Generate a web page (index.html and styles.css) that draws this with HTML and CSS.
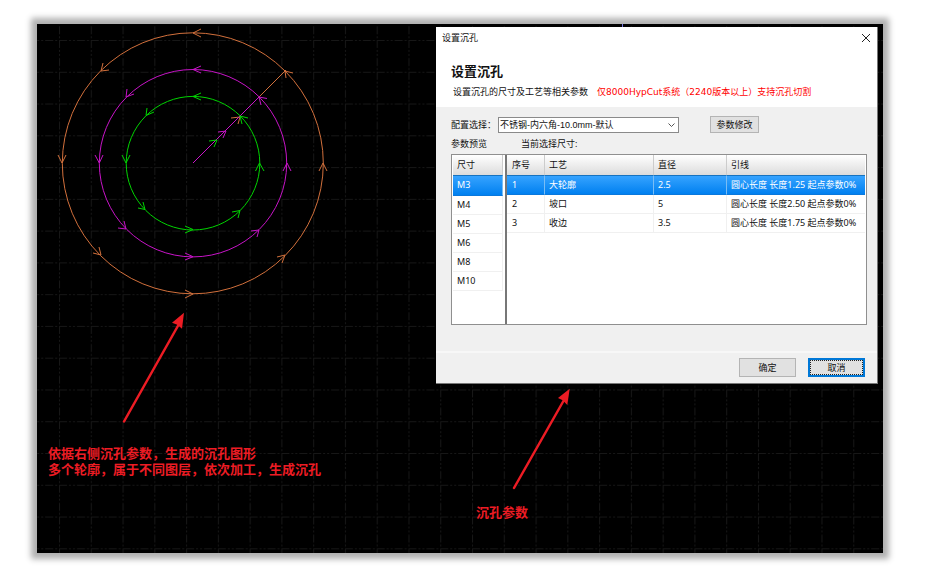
FILE: index.html
```html
<!DOCTYPE html>
<html lang="zh-CN">
<head>
<meta charset="utf-8">
<title>设置沉孔</title>
<link rel="stylesheet" href="styles.css">
</head>
<body>
<main class="canvas">
  <svg class="drawing" aria-hidden="true">
    <defs>
      <pattern id="grid" width="31.77" height="31.77" patternUnits="userSpaceOnUse" x="59" y="40">
        <path d="M0 .5H31.77M.5 0V31.77" fill="none" stroke="#171717" stroke-dasharray="8 2 2 2 2 2 8 2 2 2"/>
      </pattern>
    </defs>
    <g transform="translate(-37 -24)">
      <rect x="37" y="24" width="100%" height="100%" fill="url(#grid)"/>
      <path d="M622.5 24V28" stroke="#7070e0"/>
      <g class="contour orange">
        <circle cx="192.8" cy="163.3" r="130.5"/>
        <path class="lead" d="M259 97L286 70"/>
        <path d="M201 29L193 33L201 37M103 63L101 71L109 70M58 155L62 163L66 155M93 253L101 255L99 247M185 290L193 294L185 298M277 257L285 255L282 263M319 171L323 163L327 171M286 78L285 71L293 73M231 118L240 117L238 124"/>
      </g>
      <g class="contour magenta">
        <circle cx="193" cy="163.2" r="93.7"/>
        <path class="lead" d="M193 163L259 97"/>
        <path d="M201 66L193 69.5L201 73M127 89L126 97L134 94M95 155L99.3 163L103 155M118 228L126 229L124 221M185 253L193 256.7L185 260M251 231L259 230L257 237M283 171L287 163L291 171M261 105L259 97L267 98.5M218 132L226 131L223 138"/>
      </g>
      <g class="contour green">
        <circle cx="193" cy="163.2" r="66.8"/>
        <path d="M201 93L193 96.5L201 100M147 108L146 115.5L154 112M122 155L126 163L130 155M138 208L145 209.5L143 202M185 226L193 229.5L185 233M232 212L240 210.5L238 218M255.5 171L259.5 163L264 171M242 124L240 116L248 118M209 141L217 140L214 147"/>
      </g>
      <g class="pointer">
        <path class="shaft" d="M124 421.5L179 324M514 488L564 400"/>
        <path class="tip" d="M184 312.7L172 322.7L177.3 324.7L182 328.7ZM569.7 388.7L558 398L562.7 400.3L567.3 405Z"/>
      </g>
    </g>
  </svg>

  <p class="note note-shape">依据右侧沉孔参数，生成的沉孔图形<br>多个轮廓，属于不同图层，依次加工，生成沉孔</p>
  <p class="note note-dialog">沉孔参数</p>

  <section class="dialog" role="dialog" aria-labelledby="dialog-title">
    <header class="dialog-header">
      <div class="titlebar">
        <span>设置沉孔</span>
        <button class="close" type="button" aria-label="关闭">
          <svg width="8" height="8" viewBox="0 0 8 8"><path d="M0 0L8 8M8 0L0 8" stroke="#222" fill="none"/></svg>
        </button>
      </div>
      <h1 id="dialog-title">设置沉孔</h1>
      <p class="subtitle"><span>设置沉孔的尺寸及工艺等相关参数</span><span class="warning">仅8000HypCut系统（2240版本以上）支持沉孔切割</span></p>
    </header>

    <form class="dialog-body">
      <div class="config-row">
        <label for="config">配置选择：</label>
        <span class="select-box">
          <select id="config"><option>不锈钢-内六角-10.0mm-默认</option></select>
          <svg width="7" height="4" viewBox="0 0 7 4"><path d="M.5 .5L3.5 3.5L6.5 .5" fill="none" stroke="#555"/></svg>
        </span>
        <button class="button edit" type="button">参数修改</button>
      </div>
      <div class="caption-row"><span>参数预览</span><span>当前选择尺寸:</span></div>
      <div class="tables">
        <div class="sizes">
          <table class="size-table">
            <thead><tr><th>尺寸</th></tr></thead>
            <tbody>
              <tr class="selected"><td>M3</td></tr>
              <tr><td>M4</td></tr>
              <tr><td>M5</td></tr>
              <tr><td>M6</td></tr>
              <tr><td>M8</td></tr>
              <tr><td>M10</td></tr>
            </tbody>
          </table>
        </div>
        <div class="steps">
          <table class="step-table">
            <colgroup><col class="col-index"><col class="col-process"><col class="col-diameter"><col></colgroup>
            <thead><tr><th>序号</th><th>工艺</th><th>直径</th><th>引线</th></tr></thead>
            <tbody>
              <tr class="selected"><td>1</td><td>大轮廓</td><td>2.5</td><td>圆心长度 长度1.25 起点参数0%</td></tr>
              <tr><td>2</td><td>坡口</td><td>5</td><td>圆心长度 长度2.50 起点参数0%</td></tr>
              <tr><td>3</td><td>收边</td><td>3.5</td><td>圆心长度 长度1.75 起点参数0%</td></tr>
            </tbody>
          </table>
        </div>
      </div>
    </form>

    <footer class="dialog-footer">
      <button class="button action" type="button">确定</button>
      <button class="button action default" type="button">取消</button>
    </footer>
  </section>
</main>
</body>
</html>
```
FILE: styles.css
```css
* { box-sizing: border-box; }

body {
  margin: 0;
  padding: 24px 56px 29px 37px;
  background: #fff;
  color: #111;
  font: 9px/12px "Noto Sans", "Noto Sans CJK SC", sans-serif;
}

h1, p { margin: 0; }

button, select { font: inherit; color: inherit; }

.canvas {
  position: relative;
  min-height: calc(100vh - 53px);
  background: #000;
  box-shadow: 0 0 6px 6px #b0b0b0;
}

.drawing {
  position: absolute;
  inset: 0;
  width: 100%;
  height: 100%;
}

.contour { fill: none; stroke-width: 1; }
.lead { shape-rendering: crispEdges; }
.orange { stroke: #d2703c; }
.magenta { stroke: #c814c8; }
.green { stroke: #00d400; }
.pointer .shaft { fill: none; stroke: #ed1c24; stroke-width: 2.5; stroke-linecap: round; }
.pointer .tip { fill: #ed1c24; }

.note {
  position: absolute;
  color: #ed1c24;
  font: bold 13px/16px "Noto Sans CJK SC", sans-serif;
  white-space: nowrap;
}
.note-shape { left: 11px; top: 421px; }
.note-dialog { left: 439px; top: 480px; }

.dialog {
  position: absolute;
  top: 3px;
  right: 5px;
  width: 442px;
  background: #f0f0f0;
  border-right: 1px solid #777;
  border-bottom: 1px solid #777;
}

.dialog-header {
  height: 80px;
  background: #fff;
}

.titlebar {
  display: flex;
  align-items: center;
  justify-content: space-between;
  height: 22px;
  padding: 0 7px 0 6px;
}

.close {
  display: flex;
  padding: 0;
  border: 0;
  background: none;
}

h1 {
  margin: 12px 15px 0;
  font-size: 13px;
  line-height: 20px;
}

.subtitle {
  display: flex;
  gap: 9px;
  padding: 5px 17px 0;
  white-space: nowrap;
}
.warning {
  color: #f00;
  font-family: "DejaVu Sans", "Noto Sans CJK SC", sans-serif;
}

.dialog-body { padding: 9px 10px 26px 15px; }

.config-row {
  display: flex;
  align-items: center;
  height: 17px;
}
.config-row label { width: 47px; white-space: nowrap; }

.select-box {
  position: relative;
  width: 181px;
  margin-right: 31px;
}
.select-box select {
  display: block;
  width: 100%;
  height: 16px;
  padding: 0 16px 0 1px;
  border: 1px solid #8a8a8a;
  border-radius: 0;
  background: #fff;
  font-family: "Liberation Sans", "Noto Sans CJK SC", sans-serif;
  appearance: none;
}
.select-box svg {
  position: absolute;
  right: 4px;
  top: 6px;
  pointer-events: none;
}

.button {
  padding: 0;
  border: 1px solid #b4b4b4;
  background: #e1e1e1;
}
.edit { width: 49px; height: 17px; }

.caption-row {
  display: flex;
  gap: 34px;
  padding: 5px 0 4px;
}

.tables {
  display: flex;
  height: 171px;
  border: 1px solid #8f8f8f;
  background: #fff;
}
.sizes { width: 53px; padding: 0 2px 0 1px; }
.steps { flex: 1; border-left: 2px solid #777; padding-right: 1px; }

table {
  width: 100%;
  border-collapse: separate;
  border-spacing: 0;
  table-layout: fixed;
}
.size-table { height: 136px; }
.step-table { height: 78px; }
.col-index { width: 38px; }
.col-process { width: 109px; }
.col-diameter { width: 73px; }

th, td {
  padding: 0 0 0 4px;
  text-align: left;
  font-weight: normal;
  white-space: nowrap;
}
.step-table th:first-child, .step-table td:first-child { padding-left: 5px; }
th {
  height: 20px;
  border-right: 1px solid #ccc;
  background: linear-gradient(#fff, #dcdcdc);
}
td {
  border-right: 1px solid #f0f0f0;
  border-bottom: 1px solid #f0f0f0;
}
.selected td {
  border-top: 1px solid #1673c0;
  border-right-color: #79bdf5;
  border-bottom-color: #0a78dc;
  background: linear-gradient(#36a3ff, #0080f0);
  color: #fff;
}
.step-table th:last-child, .step-table td:last-child { border-right: 0; }

.dialog-footer {
  display: flex;
  justify-content: flex-end;
  gap: 12px;
  padding: 5px 12px 6px;
  border-top: 2px solid #f7f7f7;
}
.action { width: 57px; height: 19px; }
.default {
  border: 2px solid #0078d7;
  outline: 1px dotted #222;
  outline-offset: -3px;
}
```
